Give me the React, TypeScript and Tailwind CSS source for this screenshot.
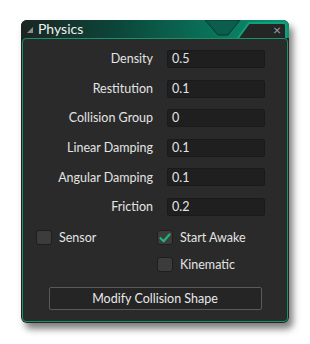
/** Physics properties panel — dark editor window with teal title bar. */
const font = { fontFamily: 'Lato, "Open Sans", sans-serif' };

const fields = [
  { label: "Density", value: "0.5" },
  { label: "Restitution", value: "0.1" },
  { label: "Collision Group", value: "0" },
  { label: "Linear Damping", value: "0.1" },
  { label: "Angular Damping", value: "0.1" },
  { label: "Friction", value: "0.2" },
];

function Check({ on, label }: { on?: boolean; label: string }) {
  return (
    <div className="flex h-[16px] items-center gap-[7px]">
      <span className="flex h-[15px] w-[16px] items-center justify-center rounded-[3px] border border-[#1e1e1e] bg-[#3c3c3c]">
        {on && (
          <svg width="12" height="10" viewBox="0 0 12 10">
            <path d="M1.5 5.2 L4.6 8.2 L10.5 1.5" fill="none" stroke="#1fb57a" strokeWidth="2.2" strokeLinecap="round" strokeLinejoin="round" />
          </svg>
        )}
      </span>
      <span className="pt-[1px] text-[12.5px] text-[#e4e4e4]">{label}</span>
    </div>
  );
}

export default function App() {
  return (
    <div className="min-h-screen bg-white pl-[21px] pt-[20px]" style={font}>
      <div className="flex h-[303px] w-[268px] flex-col overflow-hidden rounded-[6px] bg-[#1f2421] shadow-[4px_6px_7px_rgba(0,0,0,0.5)]">
        {/* title bar */}
        <div className="relative flex h-[18px] shrink-0 items-center bg-[linear-gradient(to_right,#1c2522_0%,#0c4539_35%,#0a6b54_65%,#0e9272_100%)] pl-[6px]">
          <svg width="6" height="6" viewBox="0 0 6 6" className="mt-[2px]">
            <path d="M6 0 L6 6 L0 6 Z" fill="#8a8f8d" />
          </svg>
          <span className="ml-[5px] text-[14px] leading-none text-[#eef2f0]">Physics</span>
          <svg className="absolute right-0 top-0" width="85" height="18" viewBox="0 0 85 18">
            <path d="M1 0 L36 0 L24 15 L14 15 Z" fill="#0a5e4b" stroke="#06392e" strokeWidth="1" />
            <path d="M34 18 L45 3 L80 3 Q82 3 82 6 L82 18 Z" fill="#242626" />
            <path d="M34 18 L45 3 L80 3 Q82 3 82 6 L82 18" fill="none" stroke="#10a07b" strokeWidth="2" />
          </svg>
          <span className="absolute right-[8px] top-[3px] text-[14px] leading-none text-[#9aa09e]">×</span>
        </div>
        {/* body */}
        <div className="mx-[1px] mb-[1px] flex flex-1 flex-col rounded-[4px] border border-[#17936a] bg-[#2a2a2a] pt-[11px]">
          <div className="grid grid-cols-[130px_98px] gap-x-[14px] gap-y-[11.6px]">
            {fields.map((f) => (
              <div key={f.label} className="contents">
                <div className="flex h-[18px] items-center justify-end pt-[1px] text-[12.5px] text-[#e4e4e4]">{f.label}</div>
                <div className="flex h-[18px] items-center rounded-[2px] border border-[#1a1a1a] bg-[#1f1f1f] pl-[4px] pt-[1px] text-[12.5px] text-[#e4e4e4]">
                  {f.value}
                </div>
              </div>
            ))}
          </div>
          <div className="mt-[14px] grid grid-cols-[121px_1fr] gap-y-[11px] pl-[13px]">
            <Check label="Sensor" />
            <Check on label="Start Awake" />
            <div />
            <Check label="Kinematic" />
          </div>
          <div className="mt-[14px] flex h-[23px] w-[213px] items-center justify-center self-center rounded-[2px] border border-[#5a5a5a] bg-[#252525] pt-[1px] text-[12.5px] text-[#e8e8e8]">
            Modify Collision Shape
          </div>
        </div>
      </div>
    </div>
  );
}
